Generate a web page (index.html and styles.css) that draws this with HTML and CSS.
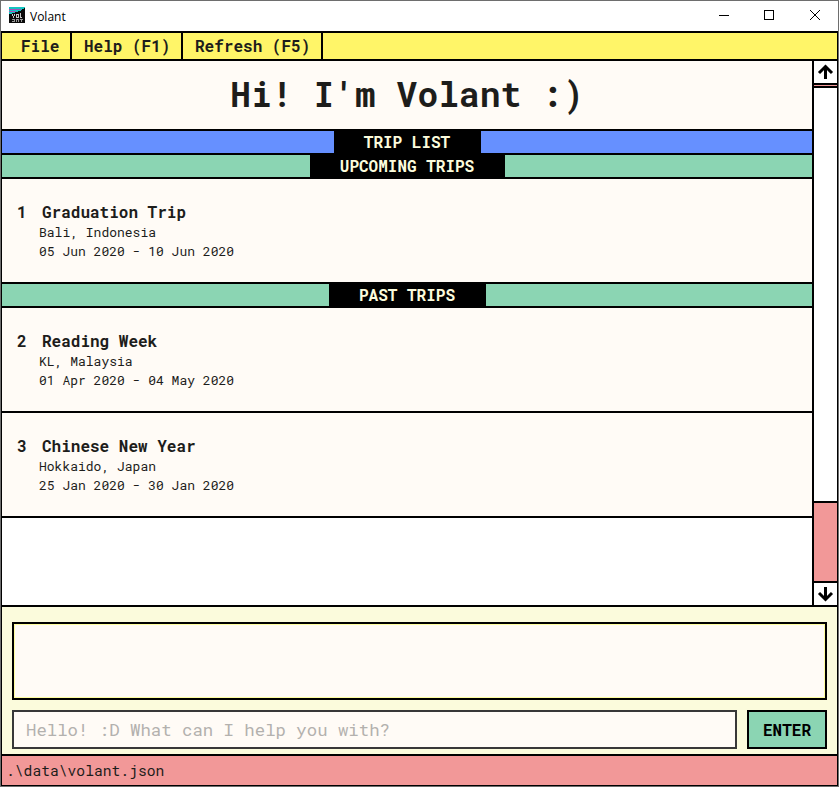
FILE: index.html
```html
<!DOCTYPE html>
<html lang="en">
<head>
<meta charset="utf-8">
<title>Volant</title>
<link rel="stylesheet" href="styles.css">
</head>
<body>
<div class="window">
  <header class="titlebar">
    <svg class="logo" width="16" height="16" viewBox="0 0 16 16" shape-rendering="crispEdges">
      <path fill="#0a0a0a" d="M0 0h16v16H0z"/>
      <path fill="#13c4c0" d="M0 0h16v1h-1v1h-2v1h-1v1H9v1H6v1H3v1H0z"/>
      <path fill="#a84fb8" d="M0 2h12v1H0zM0 4h7v1H0z"/>
      <path fill="#c8c8c8" d="M3 7h1v2H3zM4 9h1v2H4zM5 7h1v2H5zM7 7h1v4H7zM8 7h1v1H8zM8 10h1v1H8zM9 7h1v4H9zM11 6h1v5h-1zM12 10h1v1h-1z"/>
      <path fill="#999" d="M3 12h2v1H3zM3 14h2v1H3zM5 12h1v3H5zM7 12h1v3H7zM8 12h1v1H8zM9 12h1v3H9zM11 12h3v1h-3zM12 12h1v3h-1z"/>
    </svg>
    <span class="app-name">Volant</span>
    <svg class="controls" width="110" height="16" viewBox="0 0 110 16" fill="none" stroke="#000">
      <path d="M0 7.500h10M45.500 2.500h9v9h-9z" shape-rendering="crispEdges"/>
      <path d="M91 2l10 10M101 2l-10 10"/>
    </svg>
  </header>
  <div class="app">
    <nav class="menu">
      <span class="menu-item menu-file">File</span>
      <span class="menu-item">Help (F1)</span>
      <span class="menu-item">Refresh (F5)</span>
    </nav>
    <div class="main">
      <main class="content">
        <h1 class="greeting">Hi! I'm Volant :)</h1>
        <div class="band band-blue"><span class="band-label">TRIP LIST</span></div>
        <div class="band"><span class="band-label">UPCOMING TRIPS</span></div>
        <section class="card">
          <h2 class="trip"><span class="num">1</span>Graduation Trip</h2>
          <p class="detail">Bali, Indonesia</p>
          <p class="detail">05 Jun 2020 - 10 Jun 2020</p>
        </section>
        <div class="band"><span class="band-label">PAST TRIPS</span></div>
        <section class="card">
          <h2 class="trip"><span class="num">2</span>Reading Week</h2>
          <p class="detail">KL, Malaysia</p>
          <p class="detail">01 Apr 2020 - 04 May 2020</p>
        </section>
        <section class="card">
          <h2 class="trip"><span class="num">3</span>Chinese New Year</h2>
          <p class="detail">Hokkaido, Japan</p>
          <p class="detail">25 Jan 2020 - 30 Jan 2020</p>
        </section>
      </main>
      <aside class="scrollbar">
        <div class="arrow arrow-up"><svg width="23" height="22" viewBox="0 0 23 22"><path d="M11.500 18V6M5 12l6.500-6.500L18 12"/></svg></div>
        <div class="gap"></div>
        <div class="track"></div>
        <div class="thumb"></div>
        <div class="arrow"><svg width="23" height="22" viewBox="0 0 23 22"><path d="M11.500 4v12M5 10l6.500 6.500L18 10"/></svg></div>
      </aside>
    </div>
    <div class="console">
      <div class="result"></div>
      <div class="command">
        <input class="prompt" type="text" placeholder="Hello! :D What can I help you with?">
        <button class="enter">ENTER</button>
      </div>
    </div>
    <footer class="status">.\data\volant.json</footer>
  </div>
</div>
</body>
</html>
```

FILE: styles.css
```css
* { box-sizing: border-box; margin: 0; padding: 0; }

body {
  width: 839px;
  height: 787px;
  overflow: hidden;
  background: #fff;
  color: #1d1d1b;
  font: 700 16px/22px "Roboto Mono", "DejaVu Sans Mono", monospace;
}

.window {
  display: flex;
  flex-direction: column;
  width: 839px;
  height: 787px;
  border: 1px solid #6e6e6e;
}

.titlebar {
  display: flex;
  align-items: center;
  flex: 0 0 30px;
  padding: 0 9px 0 8px;
  font: 400 12px/16px "Open Sans", sans-serif;
  color: #000;
}
.logo { margin-top: -2px; }
.app-name { margin: 1px 0 0 5px; }
.controls { margin-left: auto; }

.app {
  display: flex;
  flex-direction: column;
  flex: 1;
  border: 1px solid #000;
  border-top-width: 2px;
}

.menu {
  display: flex;
  flex: 0 0 28px;
  background: #fff568;
  border-bottom: 2px solid #000;
  line-height: 26px;
}
.menu-item { padding: 0 10.600px 0 12px; border-right: 2px solid #000; }
.menu-file { padding: 0 10.600px 0 19px; }

.main { display: flex; flex: 0 0 546px; border-bottom: 2px solid #000; }
.content { flex: 1; background: #fff; }
.greeting {
  height: 70px;
  background: #fffbf6;
  border-bottom: 2px solid #000;
  font-size: 34.67px;
  line-height: 65px;
  text-align: center;
}
.band {
  display: flex;
  justify-content: center;
  height: 24px;
  background: #8bd5b3;
  border-bottom: 2px solid #000;
}
.band-blue { background: #6690ff; }
.band-label { margin-left: 0.600px; padding: 0 30.600px 0 30px; background: #000; color: #fcfcdc; }

.card {
  height: 105px;
  padding: 22px 15px 0;
  background: #fffbf6;
  border-bottom: 2px solid #000;
}
.trip { display: flex; height: 22px; line-height: 21px; font-size: 16px; }
.num { width: 25px; }
.detail { padding-left: 22px; font-size: 13px; font-weight: 400; line-height: 19px; }

.scrollbar { display: flex; flex-direction: column; width: 25px; border-left: 2px solid #000; }
.arrow { height: 22px; background: #fff; }
.arrow-up { height: 24px; border-bottom: 2px solid #000; }
.arrow svg { display: block; fill: none; stroke: #000; stroke-width: 3; }
.gap { height: 3px; background: #f29898; border-bottom: 2px solid #000; }
.track { flex: 1; background: #fff; }
.thumb { height: 82px; background: #f29898; border: solid #000; border-width: 2px 0; }

.console {
  display: flex;
  flex-direction: column;
  gap: 10px;
  flex: 0 0 149px;
  padding: 15px 10px 5px;
  background: #fbfbdc;
  border-bottom: 2px solid #000;
}
.result { height: 78px; background: #fffbf6; border: 2px solid #000; box-shadow: inset 0 0 0 1px #fffea0; }
.command { display: flex; gap: 10px; height: 39px; }
.prompt {
  flex: 1;
  min-width: 0;
  padding: 0 12px;
  background: #fffbf6;
  border: 2px solid #383838;
  border-radius: 0;
  font: 400 17.33px "Roboto Mono", "DejaVu Sans Mono", monospace;
}
.prompt::placeholder { color: #b3b1ae; opacity: 1; }
.enter {
  width: 80px;
  background: #8bd5b3;
  border: 2px solid #000;
  color: #000;
  font: inherit;
}
.status {
  flex: 1;
  padding-left: 4px;
  background: #f29898;
  font-size: 14.67px;
  font-weight: 400;
  line-height: 29px;
}
```
